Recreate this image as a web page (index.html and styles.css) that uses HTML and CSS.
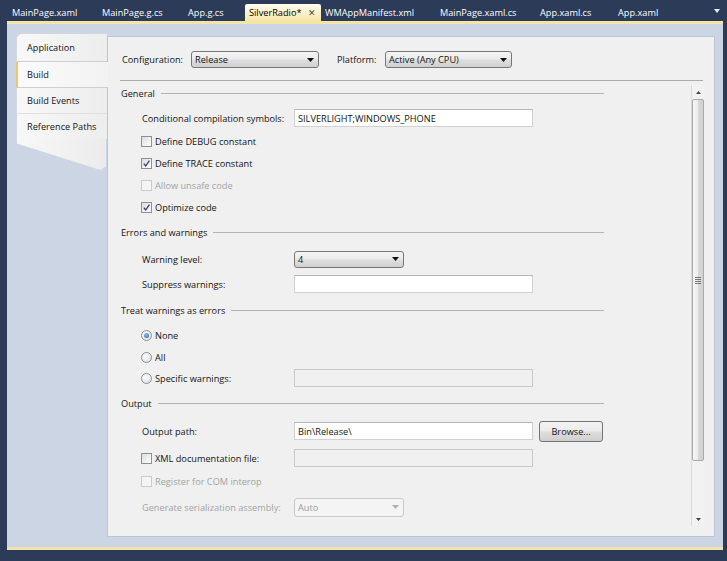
FILE: index.html
```html
<!DOCTYPE html>
<html>
<head>
<meta charset="utf-8">
<link rel="stylesheet" href="styles.css">
</head>
<body>
<div class="app">
  <div class="tabstrip">
    <div class="tab w90">MainPage.xaml</div>
    <div class="tab w86">MainPage.g.cs</div>
    <div class="tab w61">App.g.cs</div>
    <div class="tab active w76"><span>SilverRadio*</span><span class="close">✕</span></div>
    <div class="tab w115">WMAppManifest.xml</div>
    <div class="tab w100">MainPage.xaml.cs</div>
    <div class="tab w78">App.xaml.cs</div>
    <div class="tab w60">App.xaml</div>
    <div class="tab-menu"><svg width="6" height="4" viewBox="0 0 6 4"><path d="M0 0H6L3 4Z" fill="#e8ecf3"/></svg></div>
  </div>
  <div class="well">
    <div class="nav">
      <div class="nav-item first">Application</div>
      <div class="nav-item selected">Build</div>
      <div class="nav-item">Build Events</div>
      <div class="nav-item last">Reference Paths</div>
      <div class="nav-tail"></div>
    </div>
    <div class="main">
      <div class="config-row">
        <span class="cfg-label">Configuration:</span>
        <div class="select sel-config"><span>Release</span><svg class="arrow" width="7" height="4" viewBox="0 0 7 4"><path d="M0 0H7L3.5 4Z" fill="#111"/></svg></div>
        <span class="plat-label">Platform:</span>
        <div class="select sel-platform"><span>Active (Any CPU)</span><svg class="arrow" width="7" height="4" viewBox="0 0 7 4"><path d="M0 0H7L3.5 4Z" fill="#111"/></svg></div>
      </div>
      <div class="sep"></div>
      <div class="body">
        <div class="content">
          <div class="row heading"><span>General</span><i class="hline"></i></div>
          <div class="row field m3"><span class="flabel">Conditional compilation symbols:</span><div class="textbox">SILVERLIGHT;WINDOWS_PHONE</div></div>
          <div class="row check m1"><span class="cb"></span><span>Define DEBUG constant</span></div>
          <div class="row check"><span class="cb"><svg width="9" height="9" viewBox="0 0 9 9"><path d="M1.8 4.6L3.7 7L7.4 1.6" fill="none" stroke="#2f3f6b" stroke-width="1.3"/></svg></span><span>Define TRACE constant</span></div>
          <div class="row check disabled"><span class="cb"></span><span>Allow unsafe code</span></div>
          <div class="row check"><span class="cb"><svg width="9" height="9" viewBox="0 0 9 9"><path d="M1.8 4.6L3.7 7L7.4 1.6" fill="none" stroke="#2f3f6b" stroke-width="1.3"/></svg></span><span>Optimize code</span></div>

          <div class="row heading m3"><span>Errors and warnings</span><i class="hline"></i></div>
          <div class="row field m5"><span class="flabel">Warning level:</span><div class="select sel-small"><span>4</span><svg class="arrow" width="7" height="4" viewBox="0 0 7 4"><path d="M0 0H7L3.5 4Z" fill="#111"/></svg></div></div>
          <div class="row field m3"><span class="flabel">Suppress warnings:</span><div class="textbox"></div></div>

          <div class="row heading m4"><span>Treat warnings as errors</span><i class="hline"></i></div>
          <div class="row check m3"><span class="radio on"></span><span>None</span></div>
          <div class="row check"><span class="radio"></span><span>All</span></div>
          <div class="row check mneg1"><span class="radio"></span><span class="clabel">Specific warnings:</span><div class="textbox off"></div></div>

          <div class="row heading m3"><span>Output</span><i class="hline"></i></div>
          <div class="row field m6"><span class="flabel">Output path:</span><div class="textbox">Bin\Release\</div><div class="button">Browse...</div></div>
          <div class="row check m5"><span class="cb"></span><span class="clabel">XML documentation file:</span><div class="textbox off"></div></div>
          <div class="row check disabled m1"><span class="cb"></span><span>Register for COM interop</span></div>
          <div class="row field disabled m4"><span class="flabel">Generate serialization assembly:</span><div class="select sel-small sel-off"><span>Auto</span><svg class="arrow" width="7" height="4" viewBox="0 0 7 4"><path d="M0 0H7L3.5 4Z" fill="#b0b0b0"/></svg></div></div>
        </div>
        <div class="scrollbar">
          <div class="sb-arrow"><svg width="5" height="3" viewBox="0 0 5 3"><path d="M0 3H5L2.5 0Z" fill="#444"/></svg></div>
          <div class="thumb"><div class="grip"><i></i><i></i><i></i><i></i></div></div>
          <div class="sb-track"></div>
          <div class="sb-arrow"><svg width="5" height="3" viewBox="0 0 5 3"><path d="M0 0H5L2.5 3Z" fill="#444"/></svg></div>
        </div>
      </div>
    </div>
  </div>
</div>
</body>
</html>
```
FILE: styles.css
```css
* { box-sizing: border-box; }
body {
  margin: 0;
  background: #2b3b58;
  font-family: "Segoe UI", "Open Sans", sans-serif;
  font-size: 9.2px;
  color: #141414;
}
.app { width: 727px; height: 561px; overflow: hidden; }

/* document tabs */
.tabstrip {
  height: 21px;
  display: flex;
  align-items: flex-end;
  padding-left: 8px;
  color: #fff;
}
.tab {
  height: 17px;
  display: flex;
  align-items: center;
  padding-left: 4px;
  white-space: nowrap;
  flex: none;
}
.w90 { width: 90px; }
.w86 { width: 86px; }
.w61 { width: 61px; }
.w76 { width: 76px; }
.w115 { width: 115px; }
.w100 { width: 100px; }
.w78 { width: 78px; }
.w60 { width: 60px; }
.tab.active {
  background: linear-gradient(#fffcf0, #fdf2cc 50%, #f7e5a8);
  color: #000;
  border-radius: 2px 2px 0 0;
  justify-content: space-between;
  padding-right: 5px;
}
.close { font-size: 9px; color: #4a4a4a; }
.tab-menu {
  margin-left: auto;
  width: 13px;
  height: 21px;
  display: flex;
  align-items: center;
}

/* document well */
.well {
  margin-left: 7px;
  width: 716px;
  height: 529px;
  border-top: 3px solid #f4e4a8;
  border-bottom: 3px solid #f4e4a8;
  background: #ccd5e3;
  display: flex;
  align-items: flex-start;
  padding: 0 8px 10px 9px;
}

/* left navigation */
.nav {
  width: 91px;
  margin-top: 9px;
  flex: none;
  display: flex;
  flex-direction: column;
}
.nav-item {
  height: 26px;
  display: flex;
  align-items: center;
  padding-left: 10px;
  background: linear-gradient(to right, #f8f8f8, #ededed);
  border-bottom: 1px solid #e0e0e0;
  border-left: 1px solid #d3d8e0;
}
.nav-item.first {
  height: 29px;
  border-top-left-radius: 6px;
  border-top: 1px solid #d3d8e0;
  border-bottom: 1px solid #cfcfcf;
}
.nav-item.selected {
  position: relative;
  z-index: 1;
  margin-right: -1px;
  background: linear-gradient(to right, #fbfbfb, #f2f2f2);
  border-left: 2px solid #f0c56c;
  padding-left: 9px;
  border-bottom: 1px solid #cfcfcf;
}
.nav-item.last { border-bottom: none; height: 25px; }
.nav-tail {
  height: 31px;
  background: linear-gradient(to right, #f8f8f8, #ebebeb);
  border-left: 1px solid #d3d8e0;
  clip-path: polygon(0 0, 100% 0, 100% 88%, 94% 100%, 0 14%);
  margin-right: 1px;
}

/* main panel */
.main {
  flex: 1;
  height: 501px;
  margin-top: 12px;
  background: #f0f0f0;
  border: 1px solid #bcc5d3;
  display: flex;
  flex-direction: column;
}
.config-row {
  display: flex;
  align-items: center;
  height: 17px;
  margin-top: 14px;
  padding-left: 14px;
}
.cfg-label { width: 69px; }
.plat-label { width: 48px; margin-left: 18px; }
.select {
  height: 17px;
  border: 1px solid #767676;
  border-radius: 3px;
  background: linear-gradient(#f4f4f4, #ebebeb 45%, #dedede 55%, #d0d0d0);
  display: flex;
  align-items: center;
  justify-content: space-between;
  padding: 0 4px 0 3px;
  flex: none;
}
.sel-config { width: 128px; }
.sel-platform { width: 127px; }
.sel-small { width: 110px; }
.sel-off {
  height: 19px;
  border-color: #c9c9c9;
  background: #f4f4f4;
  color: #9c9c9c;
}
.sep {
  height: 1px;
  background: #ababab;
  margin: 12px 11px 0 12px;
}

.body {
  flex: 1;
  display: flex;
}
.content {
  width: 583px;
  display: flex;
  flex-direction: column;
  padding-top: 1px;
}
.row {
  height: 22px;
  display: flex;
  align-items: center;
  flex: none;
}
.m1 { margin-top: 1px; }
.m3 { margin-top: 3px; }
.m4 { margin-top: 4px; }
.m5 { margin-top: 5px; }
.m6 { margin-top: 6px; }
.mneg1 { margin-top: -1px; }

.heading {
  padding-left: 13px;
  margin-right: 87px;
}
.hline {
  flex: 1;
  height: 1px;
  background: #b4b4b4;
  margin-left: 6px;
}
.field { padding-left: 34px; }
.flabel { width: 152px; flex: none; }
.check { padding-left: 33px; }
.clabel { width: 139px; flex: none; }
.disabled { color: #a3a3a3; }

.cb {
  width: 11px;
  height: 11px;
  border: 1px solid #8e8f8f;
  background: linear-gradient(135deg, #dcdcdc, #ffffff);
  margin-right: 3px;
  display: flex;
  align-items: center;
  justify-content: center;
  flex: none;
}
.disabled .cb {
  border-color: #cacaca;
  background: #f5f5f5;
}
.radio {
  width: 11px;
  height: 11px;
  border-radius: 50%;
  border: 1px solid #8e8f8f;
  background: radial-gradient(circle at 40% 35%, #ffffff, #d8d8d8);
  margin-right: 3px;
  flex: none;
  display: flex;
  align-items: center;
  justify-content: center;
}
.radio.on::after {
  content: "";
  width: 5px;
  height: 5px;
  border-radius: 50%;
  background: radial-gradient(circle at 40% 35%, #8ec5f0, #1d5fa8);
}

.textbox {
  width: 239px;
  height: 18px;
  background: #fff;
  border: 1px solid #cfd1d5;
  border-top-color: #b5b7bc;
  padding-left: 3px;
  display: flex;
  align-items: center;
  flex: none;
}
.textbox.off {
  background: #f0f0f0;
  border-color: #c9c9c9;
}
.button {
  width: 64px;
  height: 21px;
  margin-left: 6px;
  border: 1px solid #747474;
  border-radius: 3px;
  background: linear-gradient(#f3f3f3, #ebebeb 45%, #dddddd 55%, #cfcfcf);
  display: flex;
  align-items: center;
  justify-content: center;
  flex: none;
}

/* scrollbar */
.scrollbar {
  width: 13px;
  height: 441px;
  margin-top: 4px;
  display: flex;
  flex-direction: column;
  border-left: 1px solid #dadada;
  background: #f2f2f2;
}
.sb-arrow {
  height: 14px;
  display: flex;
  align-items: center;
  justify-content: center;
  flex: none;
}
.thumb {
  height: 362px;
  border: 1px solid #a9a9a9;
  border-radius: 2px;
  background: linear-gradient(to right, #f7f7f7, #ececec 50%, #d8d8d8 55%, #d3d3d3);
  display: flex;
  align-items: center;
  justify-content: center;
  flex: none;
}
.grip {
  display: flex;
  flex-direction: column;
  gap: 1px;
}
.grip i {
  display: block;
  width: 6px;
  height: 1px;
  background: #777;
}
.sb-track { flex: 1; }
```
